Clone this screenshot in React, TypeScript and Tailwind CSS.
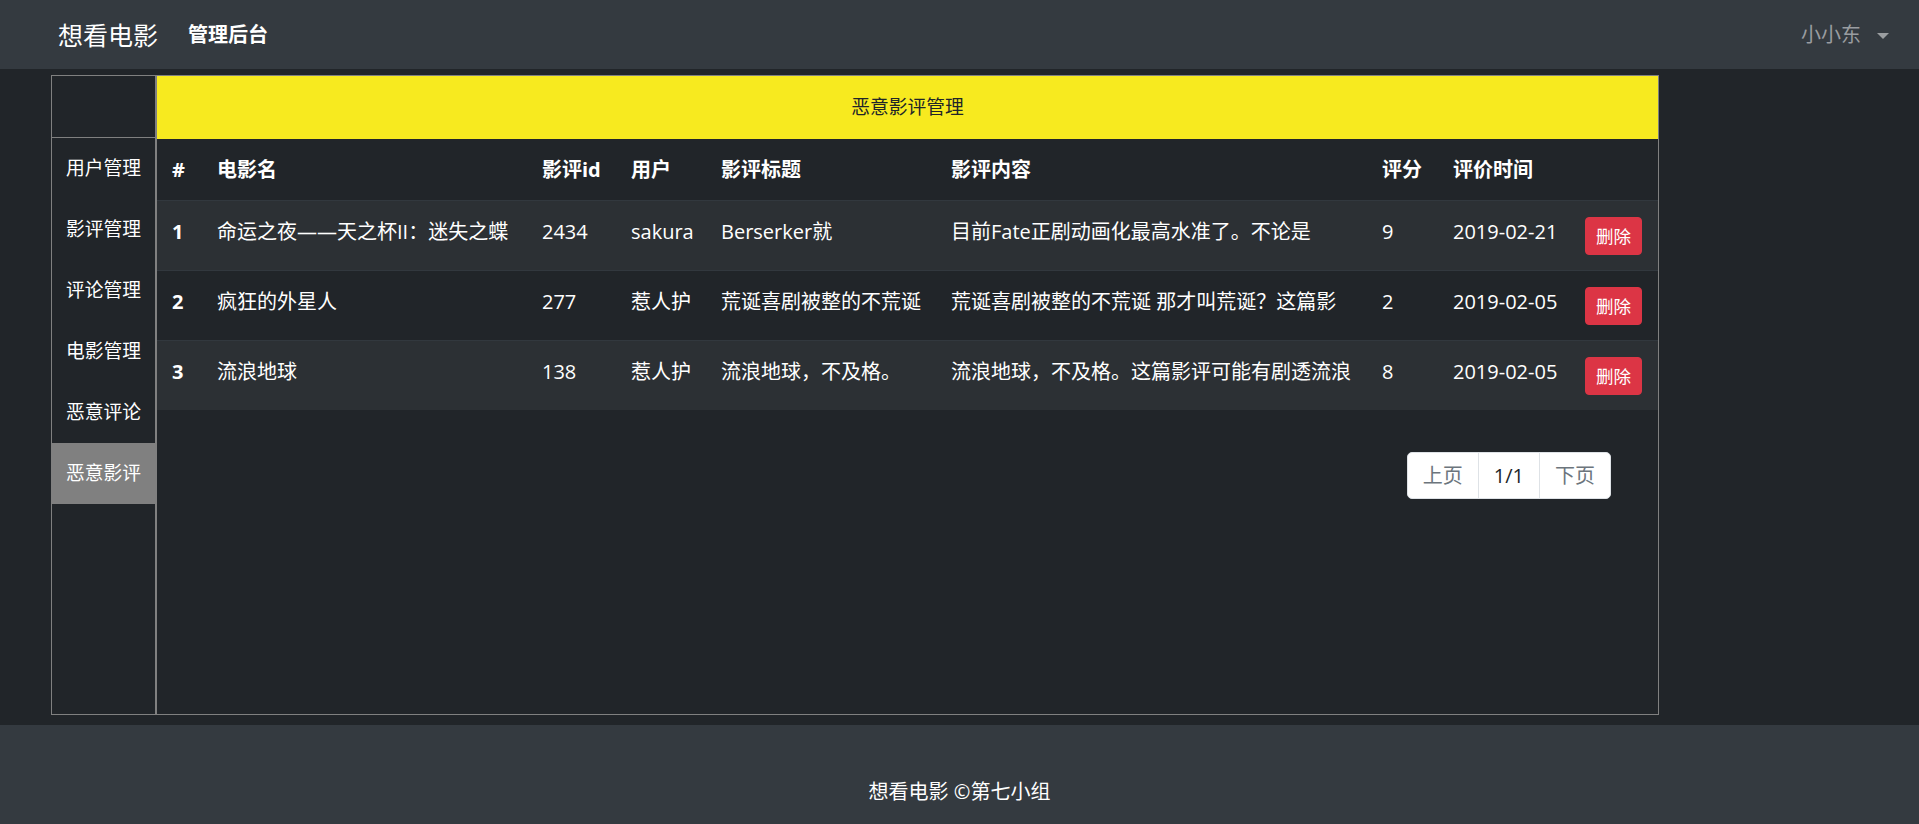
import React from 'react';

const menu = ['用户管理', '影评管理', '评论管理', '电影管理', '恶意评论', '恶意影评'];

const columns = [
  { label: '#', w: 'w-[45px]' },
  { label: '电影名', w: 'w-[325px]' },
  { label: '影评id', w: 'w-[89px]' },
  { label: '用户', w: 'w-[90px]' },
  { label: '影评标题', w: 'w-[230px]' },
  { label: '影评内容', w: 'w-[431px]' },
  { label: '评分', w: 'w-[71px]' },
  { label: '评价时间', w: 'w-[132px]' },
  { label: '', w: 'w-[88px]' },
];

const reviews = [
  {
    id: 1,
    movie: '命运之夜——天之杯II：迷失之蝶',
    reviewId: 2434,
    user: 'sakura',
    title: 'Berserker就',
    content: '目前Fate正剧动画化最高水准了。不论是',
    score: 9,
    date: '2019-02-21',
  },
  {
    id: 2,
    movie: '疯狂的外星人',
    reviewId: 277,
    user: '惹人护',
    title: '荒诞喜剧被整的不荒诞',
    content: '荒诞喜剧被整的不荒诞 那才叫荒诞？这篇影',
    score: 2,
    date: '2019-02-05',
  },
  {
    id: 3,
    movie: '流浪地球',
    reviewId: 138,
    user: '惹人护',
    title: '流浪地球，不及格。',
    content: '流浪地球，不及格。这篇影评可能有剧透流浪',
    score: 8,
    date: '2019-02-05',
  },
];

const App: React.FC = () => {
  const active = '恶意影评';

  return (
    <div className="min-h-screen bg-[#212529] font-[family-name:'Open_Sans','Noto_Sans_CJK_SC',sans-serif] text-white">
      {/* top nav */}
      <nav className="h-[69px] bg-[#343a40] flex items-center pl-[58px] pr-[30px]">
        <span className="text-[25px] leading-[38px] text-white">想看电影</span>
        <span className="ml-[30px] text-[20px] leading-[30px] font-semibold text-white">管理后台</span>
        <div className="ml-auto flex items-center text-[20px] leading-[30px] text-[#9a9da0]">
          <span>小小东</span>
          <span className="ml-[16px] mt-[2px] w-0 h-0 border-l-[6px] border-r-[6px] border-t-[6px] border-l-transparent border-r-transparent border-t-[#9a9da0]" />
        </div>
      </nav>

      {/* body */}
      <main className="h-[656px] pt-[6px]">
        <div className="ml-[51px] w-[1608px] h-[640px] flex border border-[#808080]">
          <aside className="w-[104px] shrink-0 border-r border-[#808080] flex flex-col">
            <div className="h-[62px] border-b border-[#808080]" />
            {menu.map((item) => (
              <div
                key={item}
                className={
                  'h-[61px] flex items-center justify-center text-[18.75px] text-white ' +
                  (item === active ? 'bg-[#808080]' : '')
                }
              >
                {item}
              </div>
            ))}
          </aside>

          <section className="flex-1 border-l border-[#808080] flex flex-col">
            <div className="h-[63px] bg-[#f7ea1f] flex items-center justify-center text-[18.75px] text-[#212529]">
              恶意影评管理
            </div>

            <table className="w-full table-fixed border-separate border-spacing-0 text-[20px]">
              <thead>
                <tr>
                  {columns.map((c, i) => (
                    <th
                      key={i}
                      className={c.w + ' px-[15px] py-[15px] leading-[31px] text-left font-bold align-middle whitespace-nowrap'}
                    >
                      {c.label}
                    </th>
                  ))}
                </tr>
              </thead>
              <tbody>
                {reviews.map((r, i) => {
                  const cells = [r.id, r.movie, r.reviewId, r.user, r.title, r.content, r.score, r.date];
                  return (
                    <tr key={r.id} className={i % 2 === 0 ? 'bg-[#2c3034]' : 'bg-[#212529]'}>
                      {cells.map((v, j) => (
                        <td
                          key={j}
                          className={
                            'border-t border-[#32383e] px-[15px] pt-[16px] leading-[30px] align-top whitespace-nowrap overflow-hidden ' +
                            (j === 0 ? 'font-bold' : '')
                          }
                        >
                          {v}
                        </td>
                      ))}
                      <td className="border-t border-[#32383e] px-[15px] pt-[16px] pb-[15px] align-top">
                        <button className="w-[57px] h-[38px] rounded-[4px] bg-[#dc3545] border border-[#dc3545] text-[17.5px] leading-[26px] text-white">
                          删除
                        </button>
                      </td>
                    </tr>
                  );
                })}
              </tbody>
            </table>

            <div className="mt-[42px] pr-[47px] flex justify-end">
              <div className="flex text-[20px] leading-[25px]">
                <span className="px-[15px] py-[10px] bg-white border border-[#dee2e6] rounded-l-[5px] text-[#6c757d]">
                  上页
                </span>
                <span className="-ml-px px-[15px] py-[10px] bg-white border border-[#dee2e6] text-[#212529]">
                  1/1
                </span>
                <span className="-ml-px px-[15px] py-[10px] bg-white border border-[#dee2e6] rounded-r-[5px] text-[#6c757d]">
                  下页
                </span>
              </div>
            </div>
          </section>
        </div>
      </main>

      {/* footer */}
      <footer className="bg-[#343a40] pt-[52px] pb-[50px] flex justify-center text-[20px] leading-[30px] text-white">
        想看电影 ©第七小组
      </footer>
    </div>
  );
};

export default App;
